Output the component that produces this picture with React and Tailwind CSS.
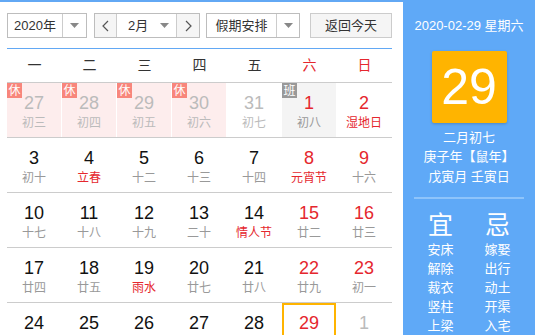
import React from "react";

const FONT = { fontFamily: '"Liberation Sans", Arial, "Noto Sans CJK SC", sans-serif' };

const rows = [
  [
    { n: 27, l: "初三", prev: true, badge: "休" },
    { n: 28, l: "初四", prev: true, badge: "休" },
    { n: 29, l: "初五", prev: true, badge: "休" },
    { n: 30, l: "初六", prev: true, badge: "休" },
    { n: 31, l: "初七", prev: true },
    { n: 1, l: "初八", badge: "班", we: true },
    { n: 2, l: "湿地日", fest: true, we: true },
  ],
  [
    { n: 3, l: "初十" },
    { n: 4, l: "立春", fest: true },
    { n: 5, l: "十二" },
    { n: 6, l: "十三" },
    { n: 7, l: "十四" },
    { n: 8, l: "元宵节", fest: true, we: true },
    { n: 9, l: "十六", we: true },
  ],
  [
    { n: 10, l: "十七" },
    { n: 11, l: "十八" },
    { n: 12, l: "十九" },
    { n: 13, l: "二十" },
    { n: 14, l: "情人节", fest: true },
    { n: 15, l: "廿二", we: true },
    { n: 16, l: "廿三", we: true },
  ],
  [
    { n: 17, l: "廿四" },
    { n: 18, l: "廿五" },
    { n: 19, l: "雨水", fest: true },
    { n: 20, l: "廿七" },
    { n: 21, l: "廿八" },
    { n: 22, l: "廿九", we: true },
    { n: 23, l: "初一", we: true },
  ],
  [
    { n: 24, l: "初二" },
    { n: 25, l: "初三" },
    { n: 26, l: "初四" },
    { n: 27, l: "初五" },
    { n: 28, l: "初六" },
    { n: 29, l: "初七", we: true, today: true },
    { n: 1, l: "初八", prev: true },
  ],
];

function Caret() {
  return (
    <svg width="9" height="5" viewBox="0 0 9 5">
      <path d="M0 0 L9 0 L4.5 5 Z" fill="#888" />
    </svg>
  );
}

function Chevron({ dir }) {
  return (
    <svg width="7" height="12" viewBox="0 0 7 12">
      <path
        d={dir === "l" ? "M6 1 L1 6 L6 11" : "M1 1 L6 6 L1 11"}
        fill="none"
        stroke="#555"
        strokeWidth="1.2"
      />
    </svg>
  );
}

function Cell({ c }) {
  let bg = "";
  if (c.badge === "休") bg = "bg-[#fdeded]";
  if (c.badge === "班") bg = "bg-[#f4f4f4]";
  let numColor = c.prev ? "text-[#bbbbbb]" : c.we ? "text-[#e5272e]" : "text-[#111]";
  if (c.badge === "班") numColor = "text-[#e5272e]";
  let lunColor = c.prev ? "text-[#bbbbbb]" : c.fest ? "text-[#e5272e]" : "text-[#999]";
  if (c.badge === "班") lunColor = "text-[#999]";
  return (
    <div className={`relative h-[54px] mr-px ${bg}`}>
      {c.today && (
        <div className="absolute left-0 top-0 w-[54px] h-[54px] border-2 border-[#ffb400]" />
      )}
      {c.badge && (
        <div
          className={`absolute left-0 top-0 w-[15px] h-[15px] flex items-center justify-center text-[12px] leading-none text-white ${
            c.badge === "休" ? "bg-[#f8867c]" : "bg-[#999]"
          }`}
        >
          {c.badge}
        </div>
      )}
      <div className="flex flex-col items-center pt-[9px]">
        <div className={`text-[18px] leading-[22px] ${numColor}`}>{c.n}</div>
        <div className={`text-[12px] leading-[18px] ${lunColor}`}>{c.l}</div>
      </div>
    </div>
  );
}

export default function App() {
  return (
    <div className="w-[535px] h-[335px] flex overflow-hidden bg-white" style={FONT}>
      <div className="w-[403px] shrink-0 border-t-2 border-[#62a8f4] pl-[7px] pr-[11px]">
        <div className="pt-[11px] pb-[10px] border-b border-[#62a8f4] flex text-[13px] text-[#333]">
          <div className="w-[80px] h-[25px] border border-[#bdbdbd] flex">
            <div className="w-[55px] flex items-center justify-center border-r border-[#ccc]">2020年</div>
            <div className="flex-1 flex items-center justify-center">
              <Caret />
            </div>
          </div>
          <div className="ml-[7px] w-[106px] h-[25px] border border-[#bdbdbd] flex">
            <div className="w-[22px] flex items-center justify-center bg-[#f5f5f5] border-r border-[#ccc]">
              <Chevron dir="l" />
            </div>
            <div className="w-[60px] flex items-center pl-[11px] pr-[7px] justify-between border-r border-[#ccc]">
              <span>2月</span>
              <Caret />
            </div>
            <div className="flex-1 flex items-center justify-center bg-[#f5f5f5]">
              <Chevron dir="r" />
            </div>
          </div>
          <div className="ml-[6px] w-[94px] h-[25px] border border-[#bdbdbd] flex">
            <div className="w-[70px] flex items-center justify-center border-r border-[#ccc]">假期安排</div>
            <div className="flex-1 flex items-center justify-center">
              <Caret />
            </div>
          </div>
          <div className="ml-[10px] w-[82px] h-[25px] border border-[#ccc] bg-[#f5f5f5] flex items-center justify-center">
            返回今天
          </div>
        </div>
        <div className="grid grid-cols-7 h-[33px] items-center text-[14px]">
          {["一", "二", "三", "四", "五", "六", "日"].map((d, i) => (
            <div key={d} className={`text-center ${i >= 5 ? "text-[#e5272e]" : "text-[#333]"}`}>
              {d}
            </div>
          ))}
        </div>
        {rows.map((r, i) => (
          <div key={i} className="grid grid-cols-7 border-t border-[#cccccc]">
            {r.map((c, j) => (
              <Cell key={j} c={c} />
            ))}
          </div>
        ))}
      </div>
      <div className="flex-1 bg-[#5fa9f7] text-white flex flex-col items-center">
        <div className="mt-[17px] text-[13px] leading-[18px] whitespace-nowrap">2020-02-29 星期六</div>
        <div className="mt-[16px] w-[75px] h-[75px] bg-[#ffb400] rounded-[2px] shadow-[0_1px_3px_rgba(0,0,0,0.2)] flex items-center justify-center text-[50px] leading-none">
          29
        </div>
        <div className="mt-[5px] text-[13px] leading-[19.5px] text-center whitespace-nowrap">
          <div>二月初七</div>
          <div>庚子年【鼠年】</div>
          <div>戊寅月 壬寅日</div>
        </div>
        <div className="mt-[11px] w-[110px] h-[2px] bg-[#8ec4fb]" />
        <div className="mt-[11px] flex gap-[31px]">
          <div className="flex flex-col items-center">
            <div className="text-[25px] leading-[30px]">宜</div>
            <div className="text-[13px] leading-[19px] text-center">
              <div>安床</div>
              <div>解除</div>
              <div>裁衣</div>
              <div>竖柱</div>
              <div>上梁</div>
            </div>
          </div>
          <div className="flex flex-col items-center">
            <div className="text-[25px] leading-[30px]">忌</div>
            <div className="text-[13px] leading-[19px] text-center">
              <div>嫁娶</div>
              <div>出行</div>
              <div>动土</div>
              <div>开渠</div>
              <div>入宅</div>
            </div>
          </div>
        </div>
      </div>
    </div>
  );
}
